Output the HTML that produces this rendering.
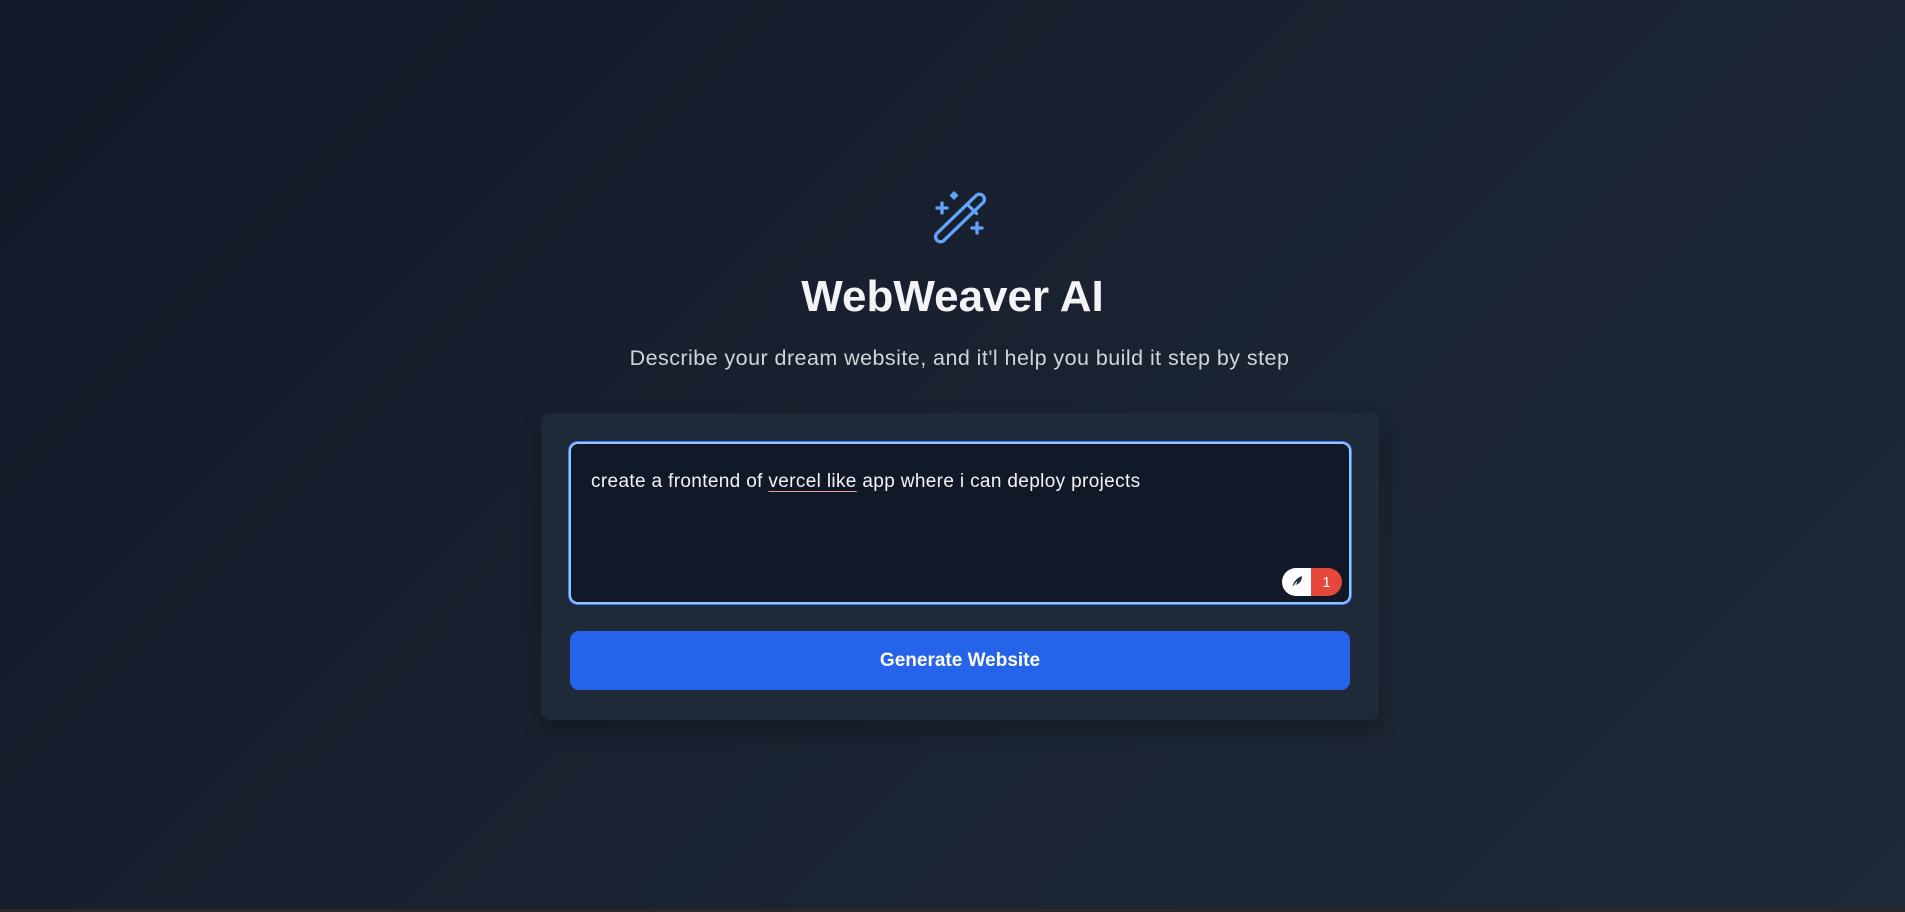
<!DOCTYPE html>
<html><head><meta charset="utf-8"><style>
html,body{margin:0;padding:0;width:1905px;height:912px;overflow:hidden}
body{background:linear-gradient(135deg,#111827 0%,#1a2231 50%,#1f2937 100%);font-family:"Segoe UI","Liberation Sans",sans-serif;position:relative}
.bottom{position:absolute;left:0;right:0;top:909px;height:3px;background:#2a2a2a}
.icon{position:absolute;left:925px;top:185px}
h1{position:absolute;left:0;right:0;top:270px;margin:0;text-align:center;color:#f3f4f6;font-size:44px;font-weight:700;line-height:54px}
.sub{position:absolute;left:14px;right:0;top:343px;text-align:center;color:#d1d5db;font-size:21.5px;line-height:30px;letter-spacing:0.45px}
.card{position:absolute;left:541px;top:413px;width:838px;height:307px;background:#1f2937;border-radius:9px;box-shadow:0 10px 20px rgba(0,0,0,.25)}
.ta{position:absolute;left:569px;top:442px;width:778px;height:158px;background:#111827;border:2px solid #93c5fd;border-radius:9px;box-shadow:0 0 0 1px #3b82f6}
.ta span.t{position:absolute;left:20px;top:25px;color:#f3f4f6;font-size:19px;line-height:26px;white-space:nowrap;letter-spacing:0.35px}
.u{text-decoration:underline;text-decoration-color:#f09a9a;text-underline-offset:4px}
.badge{position:absolute;left:711px;top:124px;width:60px;height:28px;border-radius:14px;overflow:hidden;display:flex}
.badge .a{width:29px;background:#fff;display:flex;align-items:center;justify-content:center}
.badge .b{flex:1;background:#e5483a;color:#fff;font-size:15px;display:flex;align-items:center;justify-content:center}
.btn{position:absolute;left:570px;top:631px;width:780px;height:59px;background:#2563eb;border-radius:9px;color:#fff;font-size:19px;font-weight:700;text-align:center;line-height:59px}
</style></head><body>
<svg class="icon" width="70" height="70" viewBox="925 185 70 70" fill="none" stroke="#60a5fa" stroke-width="3.3" stroke-linecap="round" stroke-linejoin="round">
<rect x="928" y="213" width="64" height="10" rx="5" transform="rotate(-44 960 218)"/>
<path d="M967.5 204.5l9 9"/>
<path d="M937 208h10M942 203v10"/>
<path d="M972 228h10M977 223v10"/>
<path d="M954 192l3.5 3.5-3.5 3.5-3.5-3.5z" fill="#60a5fa" stroke-width="1.5"/>
</svg>
<h1>WebWeaver AI</h1>
<div class="sub">Describe your dream website, and it'l help you build it step by step</div>
<div class="card"></div>
<div class="ta"><span class="t">create a frontend of <span class="u">vercel like</span> app where i can deploy projects</span>
<div class="badge"><div class="a"><svg width="14" height="14" viewBox="0 0 14 14"><path d="M2 13C3 8 6 3 12 1c0 5-3 9-8 9z" fill="#1f2d4a"/><path d="M2 13l5-6" stroke="#fff" stroke-width="1"/></svg></div><div class="b">1</div></div>
</div>
<div class="btn">Generate Website</div>
<div class="bottom"></div>
</body></html>
